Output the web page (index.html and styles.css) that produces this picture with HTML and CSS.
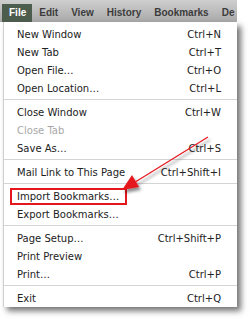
FILE: index.html
```html
<!DOCTYPE html>
<html>
<head>
    <title>File Menu</title>
    <link rel="stylesheet" href="styles.css">
</head>
<body>
    <div class="screen">
        <div class="menu-bar">
            <span class="bar-item active">File</span>
            <span class="bar-item">Edit</span>
            <span class="bar-item">View</span>
            <span class="bar-item">History</span>
            <span class="bar-item">Bookmarks</span>
            <span class="bar-item">De</span>
        </div>

        <div class="file-menu">
            <div class="menu-item"><span>New Window</span><span class="key">Ctrl+N</span></div>
            <div class="menu-item"><span>New Tab</span><span class="key">Ctrl+T</span></div>
            <div class="menu-item"><span>Open File…</span><span class="key">Ctrl+O</span></div>
            <div class="menu-item"><span>Open Location…</span><span class="key">Ctrl+L</span></div>
            <div class="separator"></div>
            <div class="menu-item"><span>Close Window</span><span class="key">Ctrl+W</span></div>
            <div class="menu-item disabled"><span>Close Tab</span></div>
            <div class="menu-item"><span>Save As…</span><span class="key">Ctrl+S</span></div>
            <div class="separator"></div>
            <div class="menu-item"><span>Mail Link to This Page</span><span class="key">Ctrl+Shift+I</span></div>
            <div class="separator"></div>
            <div class="menu-item"><span class="highlight">Import Bookmarks…</span></div>
            <div class="menu-item"><span>Export Bookmarks…</span></div>
            <div class="separator"></div>
            <div class="menu-item"><span>Page Setup…</span><span class="key">Ctrl+Shift+P</span></div>
            <div class="menu-item"><span>Print Preview</span></div>
            <div class="menu-item"><span>Print…</span><span class="key">Ctrl+P</span></div>
            <div class="separator"></div>
            <div class="menu-item"><span>Exit</span><span class="key">Ctrl+Q</span></div>
        </div>

        <svg class="callout" width="250" height="319" viewBox="0 0 250 319">
            <defs>
                <filter id="drop" x="-20%" y="-20%" width="160%" height="160%">
                    <feDropShadow dx="2" dy="3" stdDeviation="1.5" flood-color="#000" flood-opacity="0.45"/>
                </filter>
            </defs>
            <g filter="url(#drop)">
                <line x1="208" y1="137" x2="132" y2="184" stroke="#e5161c" stroke-width="1.2"/>
                <polygon points="122,190 139,187 132,175" fill="#e5161c"/>
            </g>
        </svg>
    </div>
</body>
</html>
```

FILE: styles.css
```css
body {
    margin: 0;
    background: #fff;
}

.screen {
    position: relative;
    width: 250px;
    height: 319px;
    font-family: "DejaVu Sans", "Liberation Sans", sans-serif;
    color: #222;
}

.menu-bar {
    display: flex;
    align-items: flex-end;
    width: 235px;
    height: 22px;
    padding-left: 2px;
    overflow: hidden;
    background: linear-gradient(#cfcfcf, #a9a9a9);
}

.bar-item {
    flex-shrink: 0;
    height: 18px;
    line-height: 18px;
    padding: 0 6px 0 7px;
    font-family: "Liberation Sans", Arial, sans-serif;
    font-size: 10px;
    font-weight: bold;
    color: #3c3c3c;
}

.bar-item.active {
    background: #4d5d4d;
    color: #fff;
}

.file-menu {
    width: 204px;
    margin-left: 3px;
    padding: 3px 16px 0 13px;
    background: #fff;
    border-left: 1px solid #d0d0d0;
    box-shadow: 4px 4px 6px rgba(0, 0, 0, 0.55);
    font-size: 10px;
}

.menu-item {
    display: flex;
    justify-content: space-between;
    align-items: center;
    height: 18px;
}

.menu-item.disabled {
    color: #a8a8a8;
}

.separator {
    height: 6px;
    margin: 0 -16px 0 -13px;
    background: linear-gradient(transparent 2px, #d4d4d4 2px, #d4d4d4 3px, transparent 3px);
}

.highlight {
    display: inline-block;
    line-height: 13px;
    margin-left: -7px;
    padding: 0 6px 0 5px;
    border: 2px solid #e5161c;
}

.callout {
    position: absolute;
    left: 0;
    top: 0;
    pointer-events: none;
}
```
